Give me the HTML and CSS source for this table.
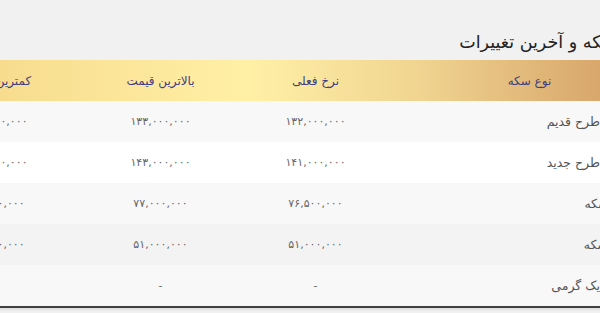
FILE: index.html
```html
<!DOCTYPE html>
<html lang="fa">
<head>
<meta charset="utf-8">
<title>قیمت سکه</title>
<link rel="stylesheet" href="styles.css">
</head>
<body>
<div class="viewport">
  <section class="panel" dir="rtl">
    <h2 class="title">قیمت سکه و آخرین تغییرات</h2>
    <table class="prices">
      <colgroup>
        <col class="c-name"><col class="c-rate"><col class="c-high"><col class="c-low"><col class="c-change">
      </colgroup>
      <thead>
        <tr>
          <th>نوع سکه</th>
          <th>نرخ فعلی</th>
          <th>بالاترین قیمت</th>
          <th>کمترین قیمت</th>
          <th>تغییرات</th>
        </tr>
      </thead>
      <tbody>
        <tr class="odd">
          <td class="name">سکه طرح قدیم</td>
          <td>۱۳۲,۰۰۰,۰۰۰</td>
          <td>۱۳۳,۰۰۰,۰۰۰</td>
          <td>۱۳۰,۰۰۰,۰۰۰</td>
          <td></td>
        </tr>
        <tr class="even">
          <td class="name">سکه طرح جدید</td>
          <td>۱۴۱,۰۰۰,۰۰۰</td>
          <td>۱۴۳,۰۰۰,۰۰۰</td>
          <td>۱۴۰,۰۰۰,۰۰۰</td>
          <td></td>
        </tr>
        <tr class="odd">
          <td class="name">نیم سکه</td>
          <td>۷۶,۵۰۰,۰۰۰</td>
          <td>۷۷,۰۰۰,۰۰۰</td>
          <td>۷۶,۰۰۰,۰۰۰</td>
          <td></td>
        </tr>
        <tr class="hover">
          <td class="name">ربع سکه</td>
          <td>۵۱,۰۰۰,۰۰۰</td>
          <td>۵۱,۰۰۰,۰۰۰</td>
          <td>۵۰,۰۰۰,۰۰۰</td>
          <td></td>
        </tr>
        <tr class="odd">
          <td class="name">سکه یک گرمی</td>
          <td>-</td>
          <td>-</td>
          <td>-</td>
          <td></td>
        </tr>
      </tbody>
    </table>
  </section>
</div>
</body>
</html>
```
FILE: styles.css
```css
html, body {
  margin: 0;
  padding: 0;
  background: #f1f1f1;
}

.viewport {
  width: 600px;
  height: 313px;
  overflow: hidden;
  display: flex;
  justify-content: flex-end;
}

.panel {
  flex: none;
  width: 860px;
  margin-right: -66px;
  padding-top: 26px;
  font-family: "DejaVu Sans", sans-serif;
}

.title {
  margin: 0 0 4px 0;
  padding: 1px 3px 0 0;
  height: 29px;
  line-height: 30px;
  font-size: 17.5px;
  font-weight: normal;
  color: #222;
}

.prices {
  width: 860px;
  border-collapse: collapse;
  table-layout: fixed;
  border-bottom: 2px solid #3f3f3f;
  box-shadow: 0 2px 2px rgba(0, 0, 0, 0.08);
}

.c-name { width: 273px; }
.c-rate { width: 155px; }
.c-high { width: 155px; }
.c-low { width: 171px; }
.c-change { width: 106px; }

.prices thead tr {
  background: linear-gradient(to right, #e9c27d 0%, #f7dc8e 22.6%, #fff0a6 51.6%, #f0d490 71.4%, #d8a76b 92.3%, #d3a066 100%);
}

.prices th {
  height: 41px;
  padding: 0;
  font-size: 12px;
  font-weight: normal;
  color: #3f3d80;
  text-align: center;
}

.prices td {
  height: 41px;
  padding: 0;
  font-size: 11px;
  color: #666;
  text-align: center;
  white-space: nowrap;
}

.prices td.name {
  text-align: right;
  padding-right: 38px;
  font-size: 12.5px;
  color: #555;
}

.odd { background: #f8f8f8; }
.even { background: #ffffff; }
.hover { background: #f3f3f3; }
```
